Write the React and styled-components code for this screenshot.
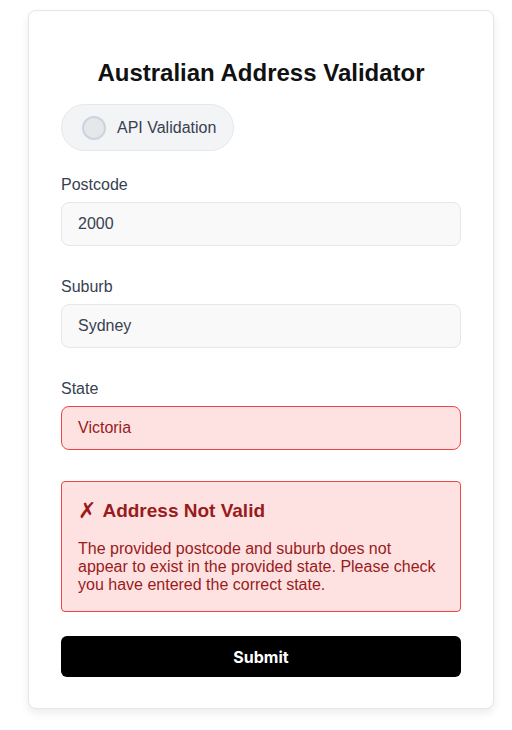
import React from "react";
import styled, { createGlobalStyle } from "styled-components";

const Global = createGlobalStyle`
  html, body { margin: 0; padding: 0; background: #ffffff; }
  body { font-family: "Liberation Sans", Arial, sans-serif; }
  * { box-sizing: border-box; }
`;

const Page = styled.div`
  padding: 10px 18px 20px 28px;
`;

const Card = styled.div`
  background: #fff;
  border: 1px solid #e5e5e5;
  border-radius: 8px;
  box-shadow: 0 4px 8px rgba(0, 0, 0, 0.08);
  padding: 32px 32px 31px 32px;
  display: flex;
  flex-direction: column;
`;

const Title = styled.h1`
  margin: 16px 0 17px;
  text-align: center;
  font-size: 24px;
  line-height: 28px;
  font-weight: 700;
  color: #111;
`;

const Toggle = styled.div`
  align-self: flex-start;
  display: flex;
  align-items: center;
  gap: 11px;
  height: 47px;
  padding: 0 17px 0 20px;
  border-radius: 999px;
  background: #f3f4f6;
  border: 1px solid #e5e7eb;
  color: #374151;
  font-size: 16px;
  margin-bottom: 25px;
`;

const Knob = styled.span`
  width: 24px;
  height: 24px;
  border-radius: 50%;
  background: #e5e7eb;
  border: 2px solid #cbd5e1;
`;

const Field = styled.div`
  display: flex;
  flex-direction: column;
  gap: 8px;
  margin-bottom: ${(p) => (p.$last ? "31px" : "32px")};
`;

const Label = styled.label`
  font-size: 16px;
  line-height: 18px;
  color: #374151;
`;

const Input = styled.div`
  height: 44px;
  display: flex;
  align-items: center;
  padding: 0 16px;
  border-radius: 8px;
  font-size: 16px;
  border: 1px solid ${(p) => (p.$error ? "#ef4444" : "#e5e7eb")};
  background: ${(p) => (p.$error ? "#fee2e2" : "#f9f9f9")};
  color: ${(p) => (p.$error ? "#991b1b" : "#374151")};
`;

const Alert = styled.div`
  border: 1px solid #ef4444;
  background: #fee2e2;
  border-radius: 4px;
  padding: 18px 16px 17px;
  color: #991b1b;
  margin-bottom: 24px;
`;

const AlertTitle = styled.div`
  display: flex;
  align-items: center;
  gap: 6px;
  font-size: 19px;
  line-height: 21px;
  font-weight: 700;
  margin-bottom: 19px;
`;

const Cross = styled.span`
  font-family: "DejaVu Sans", sans-serif;
  font-size: 22px;
  line-height: 21px;
  font-weight: 700;
`;

const AlertText = styled.p`
  margin: 0;
  font-size: 16px;
  line-height: 18px;
`;

const Button = styled.button`
  height: 41px;
  border: none;
  border-radius: 6px;
  background: #000;
  color: #fff;
  font-family: Inter, "Liberation Sans", sans-serif;
  font-weight: 700;
  font-size: 16px;
  cursor: pointer;
`;

export default function App() {
  return (
    <Page>
      <Global />
      <Card>
        <Title>Australian Address Validator</Title>
        <Toggle>
          <Knob />
          API Validation
        </Toggle>
        <Field>
          <Label>Postcode</Label>
          <Input>2000</Input>
        </Field>
        <Field>
          <Label>Suburb</Label>
          <Input>Sydney</Input>
        </Field>
        <Field $last>
          <Label>State</Label>
          <Input $error>Victoria</Input>
        </Field>
        <Alert>
          <AlertTitle>
            <Cross>✗</Cross>
            Address Not Valid
          </AlertTitle>
          <AlertText>
            The provided postcode and suburb does not appear to exist in the
            provided state. Please check you have entered the correct state.
          </AlertText>
        </Alert>
        <Button>Submit</Button>
      </Card>
    </Page>
  );
}
